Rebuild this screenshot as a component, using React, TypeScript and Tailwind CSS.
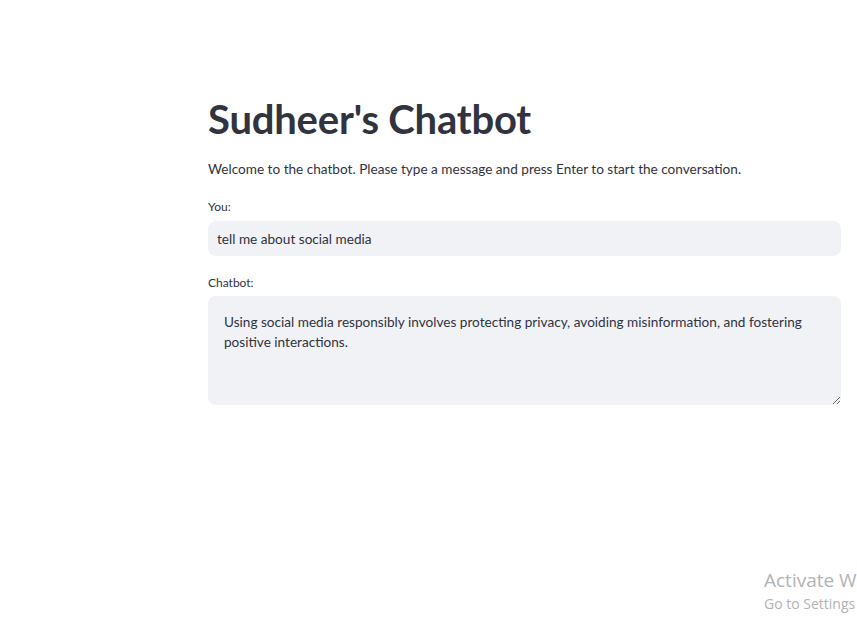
export default function App() {
  return (
    <div
      className="relative min-h-[635px] w-full overflow-hidden bg-white text-[#31333f]"
      style={{ fontFamily: "Lato, 'Liberation Sans', sans-serif" }}
    >
      <main className="ml-[208px] mr-[16px] pt-[95px]">
        <h1 className="text-[40px] font-bold leading-[48px] tracking-[-0.2px]">Sudheer's Chatbot</h1>
        <p className="mt-[16px] text-[13.6px] leading-[20px]">
          Welcome to the chatbot. Please type a message and press Enter to start the conversation.
        </p>

        <label className="mt-[20px] block text-[12px] leading-[16px]">You:</label>
        <input
          className="mt-[6px] block h-[35px] w-full rounded-[8px] bg-[#f0f2f6] px-[9px] text-[13.6px] text-[#31333f] outline-none"
          defaultValue="tell me about social media"
          readOnly
        />

        <label className="mt-[19px] block text-[12px] leading-[16px]">Chatbot:</label>
        <textarea
          className="mt-[5px] block h-[109px] w-full resize-y rounded-[8px] bg-[#f0f2f6] px-[16px] py-[16px] text-[13.6px] leading-[20px] text-[#31333f] outline-none"
          defaultValue="Using social media responsibly involves protecting privacy, avoiding misinformation, and fostering positive interactions."
          readOnly
        />
      </main>

      <div
        className="absolute left-[764px] top-[568px] whitespace-nowrap text-[#b3b3b3]"
        style={{ fontFamily: "'Open Sans', 'Noto Sans', sans-serif" }}
      >
        <div className="text-[19px] leading-[24px]">Activate Windows</div>
        <div className="mt-[2px] text-[14px] leading-[20px]">Go to Settings to activate Windows.</div>
      </div>
    </div>
  );
}
